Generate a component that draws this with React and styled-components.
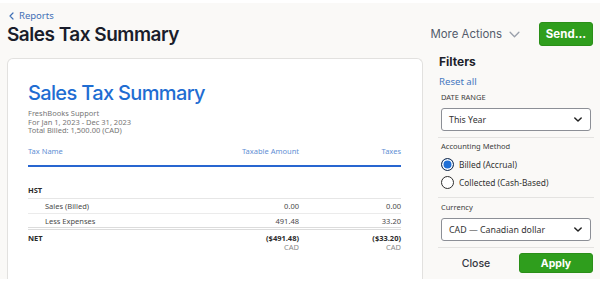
import React from "react";
import styled, { createGlobalStyle } from "styled-components";

const GlobalStyle = createGlobalStyle`
  html, body { margin: 0; padding: 0; background: #ffffff; }
  * { box-sizing: border-box; }
`;

const Page = styled.div`
  width: 600px;
  height: 276px;
  margin-top: 3px;
  background: #faf9f7;
  overflow: hidden;
  display: flex;
  flex-direction: column;
`;

const Header = styled.header`
  height: 52px;
  display: flex;
  justify-content: space-between;
  align-items: flex-start;
  padding: 0 7px;
`;

const TitleBlock = styled.div`
  padding-top: 6px;
`;

const BackLink = styled.a`
  display: flex;
  align-items: center;
  gap: 5px;
  height: 13px;
  padding-left: 2px;
  font-family: "Noto Sans", sans-serif;
  font-size: 9.5px;
  color: #3f6fb6;
  text-decoration: none;
`;

const PageTitle = styled.h1`
  margin: 0;
  font-family: "Inter", sans-serif;
  font-weight: 600;
  font-size: 19px;
  line-height: 26px;
  letter-spacing: -0.5px;
  color: #1a1d2b;
`;

const Actions = styled.div`
  display: flex;
  align-items: center;
  gap: 19px;
  padding-top: 19px;
`;

const MoreActions = styled.button`
  display: flex;
  align-items: center;
  gap: 7px;
  border: none;
  background: transparent;
  padding: 0;
  font-family: "Inter", sans-serif;
  font-size: 11.4px;
  color: #535b6b;
`;

const GreenButton = styled.button`
  height: ${(p) => p.$h}px;
  width: ${(p) => p.$w}px;
  border: 1px solid #2a8f18;
  border-radius: 3px;
  background: #2f9e1d;
  color: #ffffff;
  font-family: "Inter", sans-serif;
  font-weight: 700;
  font-size: ${(p) => p.$fs}px;
  padding: 0;
`;

const Body = styled.div`
  flex: 1;
  display: flex;
  gap: 15px;
  padding-left: 7px;
  min-height: 0;
`;

const Card = styled.section`
  width: 416px;
  margin-top: 3px;
  background: #ffffff;
  border: 1px solid #e2e1df;
  border-bottom: none;
  border-radius: 6px 6px 0 0;
  padding: 21px 21px 0 20px;
`;

const ReportTitle = styled.h2`
  margin: 0;
  font-family: "Inter", sans-serif;
  font-weight: 500;
  font-size: 20px;
  line-height: 26px;
  letter-spacing: -0.65px;
  color: #1f6dd2;
`;

const Meta = styled.div`
  margin-top: 3px;
  font-family: "Noto Sans", sans-serif;
  font-size: 7.5px;
  line-height: 8.5px;
  color: #767676;
`;

const Table = styled.table`
  width: 100%;
  margin-top: 7px;
  border-collapse: collapse;
  font-family: "Noto Sans", sans-serif;
  font-size: 7.5px;
`;

const Th = styled.th`
  height: 24px;
  padding: 4px 0 0;
  vertical-align: top;
  text-align: ${(p) => (p.$right ? "right" : "left")};
  font-weight: 400;
  line-height: 10px;
  color: #5f8fd4;
  border-bottom: 2px solid #2866d0;
  width: ${(p) => p.$w || "auto"};
`;

const GroupCell = styled.td`
  height: 33px;
  padding: 0 0 3px;
  vertical-align: bottom;
  font-weight: 700;
  line-height: 10px;
  color: #2a2a2a;
  border-bottom: 1px solid #e6e6e6;
`;

const Row = styled.tr`
  border-bottom: ${(p) => (p.$last ? "3px double #dcdcdc" : "1px solid #ebebeb")};
`;

const Td = styled.td`
  height: 15px;
  padding: 0 0 0 ${(p) => (p.$indent ? "17px" : "0")};
  vertical-align: middle;
  text-align: ${(p) => (p.$right ? "right" : "left")};
  line-height: 10px;
  color: #4a4a4a;
`;

const NetTd = styled.td`
  padding: 4px 0 0;
  vertical-align: top;
  text-align: ${(p) => (p.$right ? "right" : "left")};
  line-height: 9px;
  font-weight: 700;
  color: #2a2a2a;
`;

const Currency = styled.div`
  font-weight: 400;
  color: #8a8a8a;
`;

const Panel = styled.aside`
  width: 156px;
  display: flex;
  flex-direction: column;
`;

const PanelTitle = styled.h3`
  margin: 0;
  padding-left: 1px;
  font-family: "Inter", sans-serif;
  font-weight: 700;
  font-size: 12px;
  line-height: 14px;
  color: #1d1f2b;
`;

const ResetLink = styled.a`
  margin-top: 7px;
  padding-left: 1px;
  font-family: "Noto Sans", sans-serif;
  font-size: 9.6px;
  line-height: 12px;
  color: #4677c0;
`;

const FieldLabel = styled.div`
  margin-top: ${(p) => p.$mt}px;
  padding-left: 3px;
  font-family: "Noto Sans", sans-serif;
  font-size: 7.5px;
  line-height: 10px;
  color: #3d3d3d;
  text-transform: ${(p) => (p.$upper ? "uppercase" : "none")};
`;

const SelectBox = styled.div`
  margin: 6px 3px 0;
  height: 23px;
  border: 1px solid #8c8f96;
  border-radius: 3px;
  background: #ffffff;
  display: flex;
  align-items: center;
  justify-content: space-between;
  padding: 0 8px 0 7px;
  font-family: "Noto Sans", sans-serif;
  font-size: 8.8px;
  color: #333333;
`;

const Divider = styled.hr`
  margin: 6px 0 0;
  border: none;
  height: 1px;
  background: #e4e3e1;
`;

const RadioList = styled.div`
  margin-top: 4px;
  padding-left: 3px;
  display: flex;
  flex-direction: column;
`;

const RadioRow = styled.label`
  height: 18px;
  display: flex;
  align-items: center;
  gap: 5px;
  font-family: "Noto Sans", sans-serif;
  font-size: 8.4px;
  color: #333333;
`;

const RadioDot = styled.span`
  width: 13px;
  height: 13px;
  border-radius: 50%;
  border: ${(p) => (p.$checked ? "1px solid #23324a" : "1.3px solid #2d2d2d")};
  background: ${(p) => (p.$checked ? "#1f6fd6" : "#ffffff")};
  box-shadow: ${(p) => (p.$checked ? "inset 0 0 0 1.5px #ffffff" : "none")};
  flex-shrink: 0;
`;

const ButtonRow = styled.div`
  margin-top: 5px;
  display: flex;
  align-items: center;
  padding-right: 1px;
`;

const CloseButton = styled.button`
  flex: 1;
  height: 20px;
  border: none;
  background: transparent;
  padding: 0 5px 0 0;
  font-family: "Inter", sans-serif;
  font-weight: 500;
  font-size: 10.5px;
  color: #33363f;
`;

const Chevron = ({ w, h, color, sw }) => (
  <svg width={w} height={h} viewBox="0 0 10 6" fill="none">
    <path d="M1 1l4 4 4-4" stroke={color} strokeWidth={sw} strokeLinecap="round" strokeLinejoin="round" />
  </svg>
);

const BackChevron = () => (
  <svg width="5" height="8" viewBox="0 0 5 8" fill="none">
    <path d="M4 1L1 4l3 3" stroke="#3f6fb6" strokeWidth="1.2" strokeLinecap="round" strokeLinejoin="round" />
  </svg>
);

const rows = [
  { name: "Sales (Billed)", amount: "0.00", tax: "0.00" },
  { name: "Less Expenses", amount: "491.48", tax: "33.20" },
];

export default function App() {
  return (
    <>
      <GlobalStyle />
      <Page>
        <Header>
          <TitleBlock>
            <BackLink href="#">
              <BackChevron />
              Reports
            </BackLink>
            <PageTitle>Sales Tax Summary</PageTitle>
          </TitleBlock>
          <Actions>
            <MoreActions>
              More Actions
              <Chevron w={11} h={7} color="#9aa0ab" sw={1.2} />
            </MoreActions>
            <GreenButton $w={54} $h={24} $fs={11.5}>Send...</GreenButton>
          </Actions>
        </Header>
        <Body>
          <Card>
            <ReportTitle>Sales Tax Summary</ReportTitle>
            <Meta>
              <div>FreshBooks Support</div>
              <div>For Jan 1, 2023 - Dec 31, 2023</div>
              <div>Total Billed: 1,500.00 (CAD)</div>
            </Meta>
            <Table>
              <thead>
                <tr>
                  <Th>Tax Name</Th>
                  <Th $right $w="120px">Taxable Amount</Th>
                  <Th $right $w="102px">Taxes</Th>
                </tr>
              </thead>
              <tbody>
                <tr>
                  <GroupCell colSpan={3}>HST</GroupCell>
                </tr>
                {rows.map((r, i) => (
                  <Row key={r.name} $last={i === rows.length - 1}>
                    <Td $indent>{r.name}</Td>
                    <Td $right>{r.amount}</Td>
                    <Td $right>{r.tax}</Td>
                  </Row>
                ))}
                <tr>
                  <NetTd>NET</NetTd>
                  <NetTd $right>
                    ($491.48)
                    <Currency>CAD</Currency>
                  </NetTd>
                  <NetTd $right>
                    ($33.20)
                    <Currency>CAD</Currency>
                  </NetTd>
                </tr>
              </tbody>
            </Table>
          </Card>
          <Panel>
            <PanelTitle>Filters</PanelTitle>
            <ResetLink>Reset all</ResetLink>
            <FieldLabel $mt={4} $upper>Date Range</FieldLabel>
            <SelectBox>
              This Year
              <Chevron w={8} h={5} color="#222" sw={1.8} />
            </SelectBox>
            <Divider />
            <FieldLabel $mt={3}>Accounting Method</FieldLabel>
            <RadioList>
              <RadioRow>
                <RadioDot $checked />
                Billed (Accrual)
              </RadioRow>
              <RadioRow>
                <RadioDot />
                Collected (Cash-Based)
              </RadioRow>
            </RadioList>
            <Divider />
            <FieldLabel $mt={4}>Currency</FieldLabel>
            <SelectBox>
              CAD — Canadian dollar
              <Chevron w={8} h={5} color="#222" sw={1.8} />
            </SelectBox>
            <Divider />
            <ButtonRow>
              <CloseButton>Close</CloseButton>
              <GreenButton $w={74} $h={20} $fs={10.5}>Apply</GreenButton>
            </ButtonRow>
          </Panel>
        </Body>
      </Page>
    </>
  );
}
